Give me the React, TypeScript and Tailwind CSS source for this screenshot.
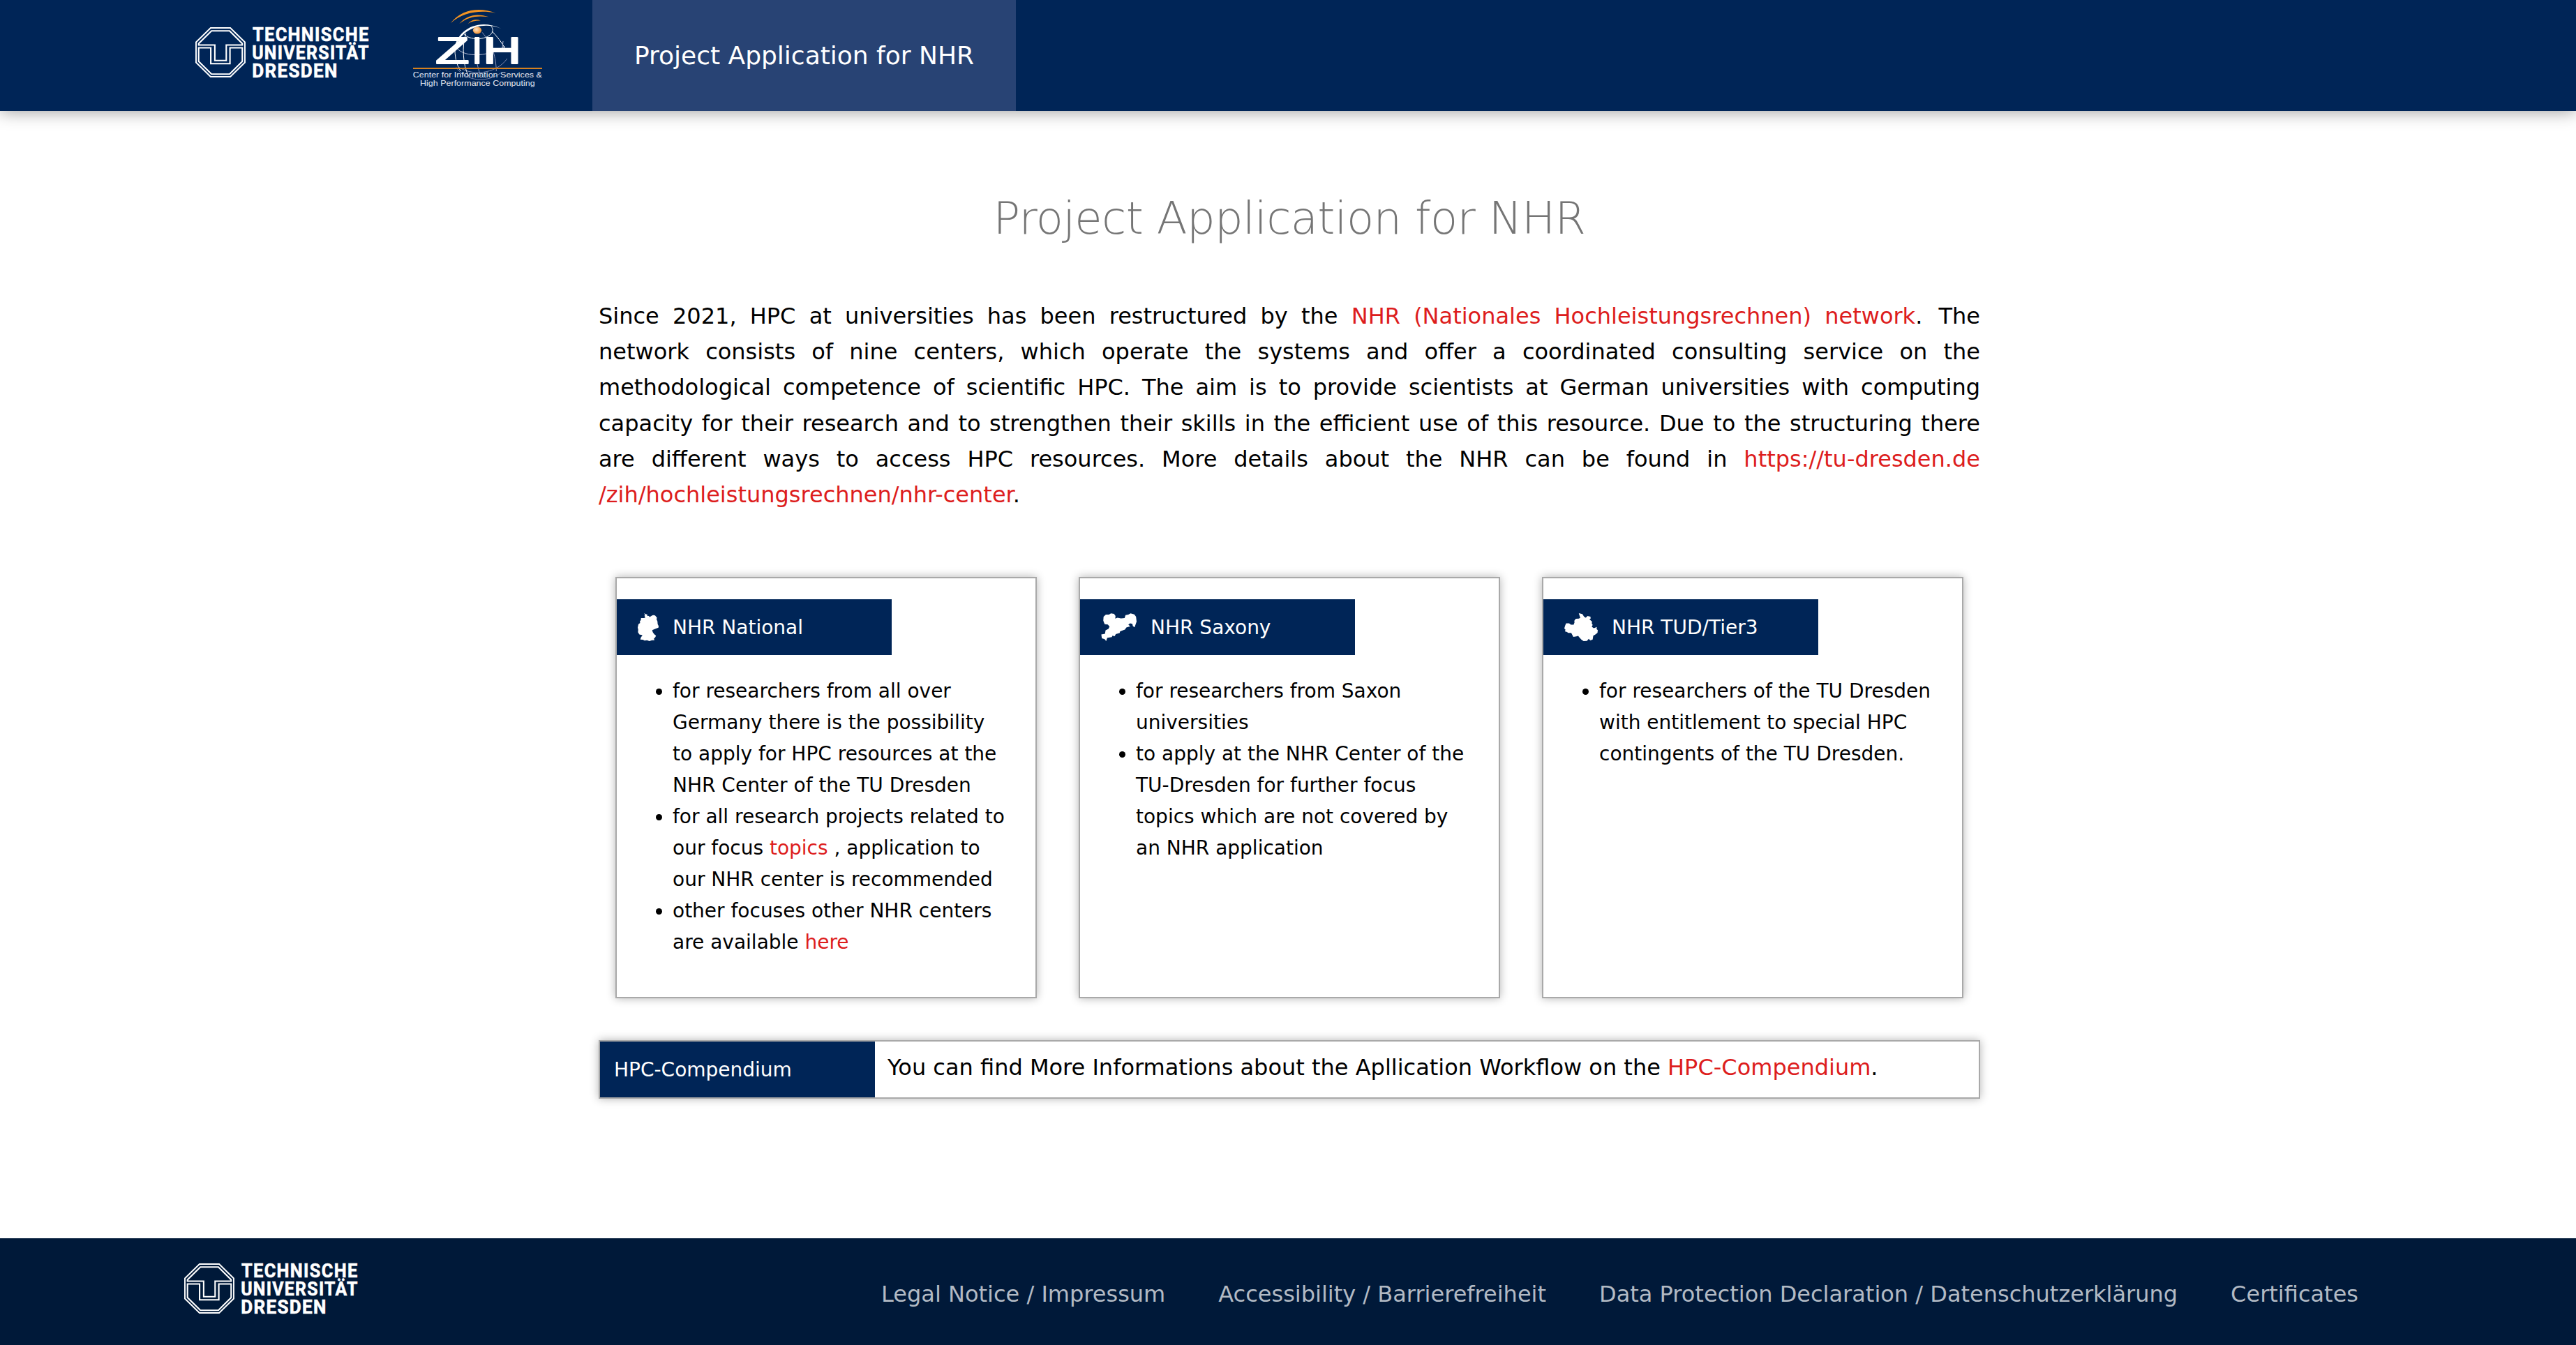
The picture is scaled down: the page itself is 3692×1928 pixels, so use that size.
import React from "react";

function TudLogo() {
  return (
    <svg viewBox="0 -12 256 96" className="block h-[96px] w-[256px] shrink-0 overflow-visible" fill="none" stroke="#fff">
      <path strokeWidth="1.9" d="M21.900 1h28.200L71 21.500v29L50.100 71H21.900L1 50.500v-29z" />
      <path strokeWidth="2.100" d="M23.200 5.200H49L67.300 23.400v2.100H44.300v22.300H27.900V25.500H4.700v-2.100z" />
      <path strokeWidth="2.100" d="M4.700 29.500h17.400v22.800h27.500V29.500h17.700v19.600L49 67.200H23.200L4.700 49.100z" />
      <g
        fill="#fff"
        stroke="#fff"
        strokeWidth="0.6"
        fontFamily="'Roboto','Liberation Sans',sans-serif"
        fontWeight="700"
        fontSize="27.400"
        letterSpacing="1.4"
      >
        <text x="82" y="19.800" textLength="167.500" lengthAdjust="spacingAndGlyphs">TECHNISCHE</text>
        <text x="81.200" y="45.800" textLength="168.500" lengthAdjust="spacingAndGlyphs">UNIVERSITÄT</text>
        <text x="81.200" y="71.800" textLength="123.500" lengthAdjust="spacingAndGlyphs">DRESDEN</text>
      </g>
    </svg>
  );
}

function ZihLogo() {
  return (
    <svg viewBox="0 0 630 390" className="block h-[130px] w-[210px] shrink-0" fill="none">
      <defs>
        <radialGradient id="ball" cx="0.4" cy="0.4" r="0.65">
          <stop offset="0" stopColor="#ffe3c4" />
          <stop offset="1" stopColor="#f08c28" />
        </radialGradient>
      </defs>
      <g fill="#f39322">
        <path d="M198 84C245 22 325 15 392 41C322 28 252 37 198 84z" />
        <path d="M235 87C270 46 315 42 362 58C312 51 274 56 235 87z" />
        <path d="M272 87C290 68 308 67 328 74C308 73 290 76 272 87z" />
      </g>
      <g stroke="#aeb6d0" strokeWidth="3" strokeLinecap="round">
        <path d="M216 185C214 225 222 262 240 290" stroke="#fff" />
        <path d="M222 275C250 325 340 350 412 300" stroke="#6d7aa5" />
        <path d="M218 182C240 232 350 235 430 185" />
        <path d="M228 270C280 312 390 308 440 238" stroke="#7f8bb0" />
        <path d="M263 130C245 180 250 265 274 312" stroke="#fff" />
        <path d="M334 125C380 180 392 230 394 290" stroke="#8c97ba" />
        <path d="M312 262L324 306" stroke="#8c97ba" />
        <path d="M256 132C275 158 350 160 374 128C382 116 378 105 372 98" stroke="#fff" />
        <path d="M376 120C396 140 418 168 432 194" stroke="#fff" />
        <path d="M423 163L420 190" />
      </g>
      <path d="M214 196C222 120 310 58 415 108C320 72 244 120 222 180z" fill="#fff" />
      <ellipse cx="312" cy="115" rx="18.500" ry="15.500" fill="url(#ball)" />
      <g
        fill="#fff"
        stroke="#fff"
        strokeWidth="6"
        strokeLinejoin="round"
        fontFamily="'Liberation Sans',sans-serif"
        fontSize="162"
      >
        <text x="132" y="259" textLength="146" lengthAdjust="spacingAndGlyphs">Z</text>
        <text x="289" y="259">I</text>
        <text x="336" y="259" textLength="166" lengthAdjust="spacingAndGlyphs">H</text>
      </g>
      <path d="M36 279H591" stroke="#d5811f" strokeWidth="6" />
      <g fill="#e6e9f2" fontFamily="'Liberation Sans',sans-serif" fontSize="31">
        <text x="35" y="318" textLength="556" lengthAdjust="spacingAndGlyphs">Center for Information Services &amp;</text>
        <text x="66" y="354" textLength="494" lengthAdjust="spacingAndGlyphs">High Performance Computing</text>
      </g>
    </svg>
  );
}

function GermanyIcon() {
  return (
    <svg viewBox="43 57 88 119" preserveAspectRatio="none" className="h-10 w-[30px]" fill="#fff">
      <path d="M70 57L76 61L84 63L82 68L90 69L93 73L105 66L110 65L116 67L124 76L122 82L126 92L127 104L131 112L130 119L118 123L104 129L106 137L112 146L120 153L116 161L111 164L113 172L103 172L92 176L82 172L72 174L65 170L54 169L56 161L63 151L50 148L44 138L45 128L43 118L46 104L53 99L52 91L56 87L57 78L70 78L75 75L71 68L74 65Z" />
    </svg>
  );
}

function SaxonyIcon() {
  return (
    <svg viewBox="118 207 125 119" preserveAspectRatio="none" className="h-10 w-[51px]" fill="#fff">
      <path d="M127 222L135 213L146 213L153 208L164 210L169 219L168 230L176 226L188 229L201 228L204 215L214 213L222 208L235 212L241 222L243 243L236 267L230 262L228 252L220 250L214 256L221 263L207 268L202 277L190 282L184 286L184 291L170 296L166 305L158 303L156 309L140 312L136 326L131 318L121 314L119 298L132 295L134 280L144 274L148 264L142 255L131 254L128 246L126 238Z" />
    </svg>
  );
}

function DresdenIcon() {
  return (
    <svg viewBox="120 207 111 119" preserveAspectRatio="none" className="h-10 w-12" fill="#fff">
      <path d="M168 207L180 211L185 221L191 226L197 219L207 222L207 231L203 233L212 243L211 250L214 257L211 265L218 271L228 266L227 275L231 279L230 290L224 297L216 303L214 319L206 323L201 316L195 325L184 326L177 320L171 312L166 304L160 306L150 308L143 291L133 291L129 287L122 284L124 278L120 272L123 259L126 250L136 250L142 256L151 256L154 246L153 240L158 231L168 230L173 227Z" />
    </svg>
  );
}

function Red({ children }: { children: React.ReactNode }) {
  return (
    <a href="#" className="text-[#dd1d1d]">
      {children}
    </a>
  );
}

function Card({ icon, title, children }: { icon: React.ReactNode; title: string; children: React.ReactNode }) {
  return (
    <section className="size-[604px] border-2 border-[#a9a9a9] pt-[30px] shadow-[0_0_12px_rgba(0,0,0,0.3)]">
      <h2 className="flex h-20 w-[394px] items-center gap-5 bg-[#002557] pl-[30px] text-[28px] leading-[44px] text-white">
        {icon}
        <span className="mt-0.5">{title}</span>
      </h2>
      <ul className="mt-[28.8px] list-disc pr-10 pl-20 text-[28px] leading-[45px]">{children}</ul>
    </section>
  );
}

export default function App() {
  return (
    <div className="flex h-[1928px] w-[3692px] flex-col overflow-hidden bg-white font-['DejaVu_Sans',sans-serif] text-black">
      <header className="flex h-[159px] shrink-0 items-start bg-[#002557] pl-[280px] shadow-[0_0_24px_rgba(0,0,0,0.42)]">
        <div className="mt-[27px]">
          <TudLogo />
        </div>
        <div className="mt-[5px] ml-11">
          <ZihLogo />
        </div>
        <a href="#" className="ml-[59px] flex h-full w-[607px] items-center justify-center bg-[#284374] text-[36px] text-white">
          Project Application for NHR
        </a>
      </header>

      <main className="ml-[858px] w-[1980px] grow">
        <h1 className="mt-[103px] text-center text-[64px] leading-[102px] font-extralight tracking-[-0.01em] text-[#757575]">
          Project Application for NHR
        </h1>
        <p className="mt-[64px] text-justify text-[32px] leading-[51.2px]">
          Since 2021, HPC at universities has been restructured by the{" "}
          <Red>NHR (Nationales Hochleistungsrechnen) network</Red>. <span className="ml-1">The</span> network consists
          of nine centers, which operate the systems and offer a coordinated consulting service on the methodological
          competence of scientific HPC. The aim is to provide scientists at German universities with computing capacity
          for their research and to strengthen their skills in the efficient use of this resource. Due to the
          structuring there are different ways to access HPC resources. More details about the NHR can be found in{" "}
          <Red>
            <span className="whitespace-nowrap">https://tu-dresden.de</span>
            <wbr />
            <span className="whitespace-nowrap">/zih/hochleistungsrechnen/nhr-center</span>
          </Red>
          .
        </p>

        <div className="mt-[92px] flex justify-between px-6">
          <Card icon={<GermanyIcon />} title="NHR National">
            <li>
              for researchers from all over Germany there is the possibility to apply for HPC resources at the NHR
              Center of the TU Dresden
            </li>
            <li>
              for all research projects related to our focus <Red>topics</Red> , application to our NHR center is
              recommended
            </li>
            <li>
              other focuses other NHR centers are available <Red>here</Red>
            </li>
          </Card>
          <Card icon={<SaxonyIcon />} title="NHR Saxony">
            <li>for researchers from Saxon universities</li>
            <li>
              to apply at the NHR Center of the TU-Dresden for further focus topics which are not covered by an NHR
              application
            </li>
          </Card>
          <Card icon={<DresdenIcon />} title="NHR TUD/Tier3">
            <li>for researchers of the TU Dresden with entitlement to special HPC contingents of the TU Dresden.</li>
          </Card>
        </div>

        <div className="mt-[60px] flex h-[84px] border-2 border-[#a9a9a9] shadow-[0_0_12px_rgba(0,0,0,0.3)]">
          <div className="flex w-[394px] items-center bg-[#002557] pt-0.5 pl-5 text-[28px] text-white">
            HPC-Compendium
          </div>
          <p className="mt-3 ml-[18px] text-[32px] leading-[51px]">
            You can find More Informations about the Apllication Workflow on the <Red>HPC-Compendium</Red>.
          </p>
        </div>
      </main>

      <footer className="flex h-[153px] shrink-0 items-start justify-between bg-[#001939] pr-[312px] pl-[264px]">
        <div className="mt-6">
          <TudLogo />
        </div>
        <nav className="mt-[55px] flex gap-[76px] text-[32px] leading-[51px] text-[#b2bac4]">
          <a href="#">Legal Notice / Impressum</a>
          <a href="#">Accessibility / Barrierefreiheit</a>
          <a href="#">Data Protection Declaration / Datenschutzerklärung</a>
          <a href="#">Certificates</a>
        </nav>
      </footer>
    </div>
  );
}
